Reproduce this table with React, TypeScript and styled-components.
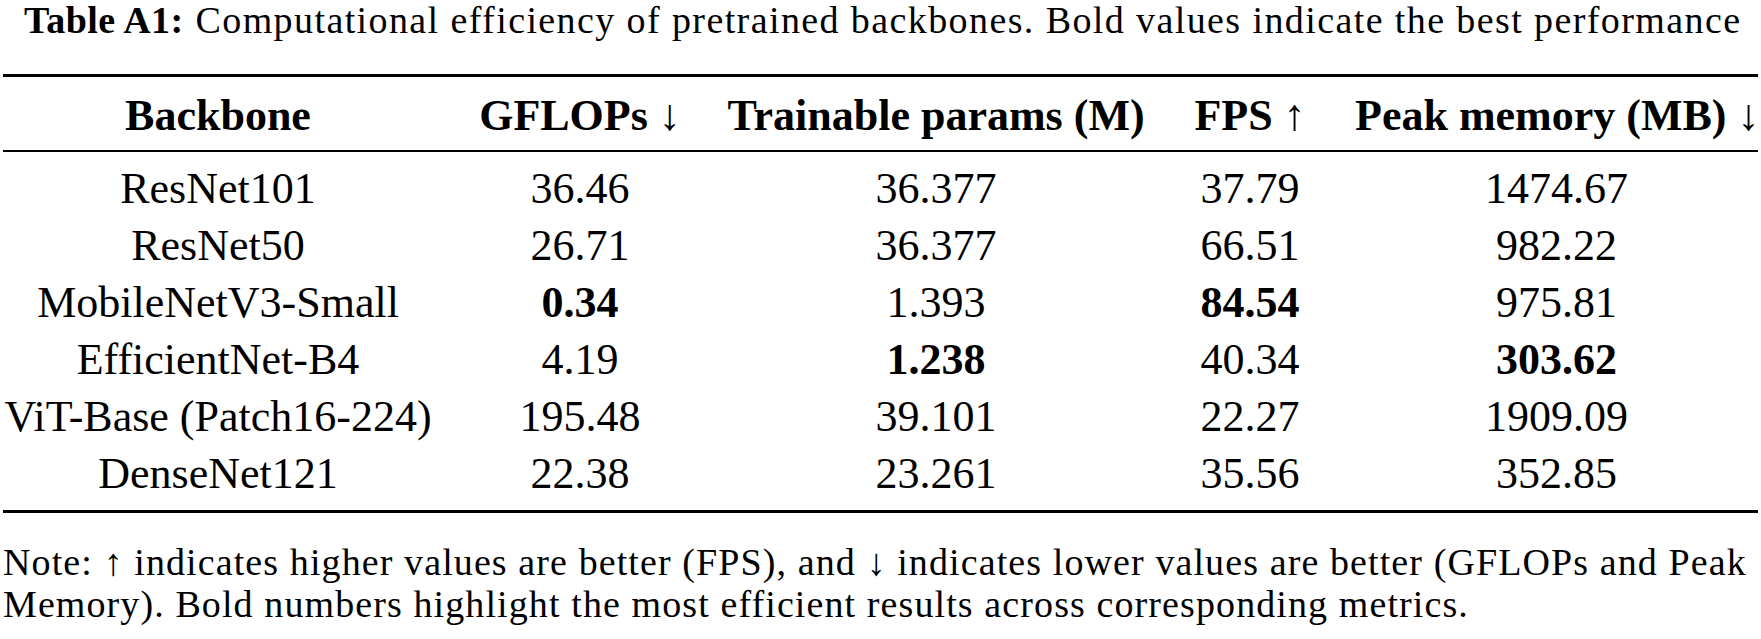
import React from "react";
import styled, { createGlobalStyle } from "styled-components";

const GlobalStyle = createGlobalStyle`
  html, body {
    margin: 0;
    padding: 0;
    background: #ffffff;
  }
  body {
    font-family: "Liberation Serif", "DejaVu Serif", serif;
    color: #000000;
  }
`;

const Page = styled.div`
  width: 1755px;
  padding: 0 3px;
  background: #ffffff;
`;

const Caption = styled.p`
  margin: 0;
  padding-left: 21px;
  font-size: 38px;
  line-height: 40px;
  letter-spacing: 1.4px;
  white-space: nowrap;
`;

const CaptionLabel = styled.span`
  font-weight: 700;
  letter-spacing: 0.4px;
  margin-right: 12px;
`;

const Rule = styled.div<{ $thick: number; $gap?: number }>`
  height: ${(p) => p.$thick}px;
  background: #000000;
  margin-top: ${(p) => p.$gap ?? 0}px;
`;

const Grid = styled.div<{ $padTop: number; $padBottom: number }>`
  display: grid;
  grid-template-columns: 430px 294px 418px 210px 403px;
  padding-top: ${(p) => p.$padTop}px;
  padding-bottom: ${(p) => p.$padBottom}px;
`;

const HeadCell = styled.div`
  font-size: 44px;
  line-height: 57px;
  font-weight: 700;
  text-align: center;
  white-space: nowrap;
`;

const Arrow = styled.span`
  font-weight: 400;
`;

const Cell = styled.div<{ $bold?: boolean }>`
  font-size: 44px;
  line-height: 57px;
  font-weight: ${(p) => (p.$bold ? 700 : 400)};
  text-align: center;
  white-space: nowrap;
`;

const Note = styled.div`
  margin-top: 28px;
`;

const NoteLine = styled.p`
  margin: 0;
  font-size: 38px;
  line-height: 42px;
  letter-spacing: 1.1px;
  white-space: nowrap;
`;

type Row = {
  name: string;
  values: [string, string, string, string];
  bold: [boolean, boolean, boolean, boolean];
};

const rows: Row[] = [
  { name: "ResNet101", values: ["36.46", "36.377", "37.79", "1474.67"], bold: [false, false, false, false] },
  { name: "ResNet50", values: ["26.71", "36.377", "66.51", "982.22"], bold: [false, false, false, false] },
  { name: "MobileNetV3-Small", values: ["0.34", "1.393", "84.54", "975.81"], bold: [true, false, true, false] },
  { name: "EfficientNet-B4", values: ["4.19", "1.238", "40.34", "303.62"], bold: [false, true, false, true] },
  { name: "ViT-Base (Patch16-224)", values: ["195.48", "39.101", "22.27", "1909.09"], bold: [false, false, false, false] },
  { name: "DenseNet121", values: ["22.38", "23.261", "35.56", "352.85"], bold: [false, false, false, false] },
];

export default function App() {
  return (
    <>
      <GlobalStyle />
      <Page>
        <Caption>
          <CaptionLabel>Table A1:</CaptionLabel>
          Computational efficiency of pretrained backbones. Bold values indicate the best performance
        </Caption>
        <Rule $thick={3} $gap={34} />
        <Grid $padTop={10} $padBottom={6}>
          <HeadCell>Backbone</HeadCell>
          <HeadCell>
            GFLOPs <Arrow>↓</Arrow>
          </HeadCell>
          <HeadCell>Trainable params (M)</HeadCell>
          <HeadCell>
            FPS <Arrow>↑</Arrow>
          </HeadCell>
          <HeadCell>
            Peak memory (MB) <Arrow>↓</Arrow>
          </HeadCell>
        </Grid>
        <Rule $thick={2} />
        <Grid $padTop={8} $padBottom={8}>
          {rows.map((r) => (
            <React.Fragment key={r.name}>
              <Cell>{r.name}</Cell>
              {r.values.map((v, i) => (
                <Cell key={i} $bold={r.bold[i]}>
                  {v}
                </Cell>
              ))}
            </React.Fragment>
          ))}
        </Grid>
        <Rule $thick={3} />
        <Note>
          <NoteLine>
            Note: ↑ indicates higher values are better (FPS), and ↓ indicates lower values are better (GFLOPs and Peak
          </NoteLine>
          <NoteLine>
            Memory). Bold numbers highlight the most efficient results across corresponding metrics.
          </NoteLine>
        </Note>
      </Page>
    </>
  );
}
